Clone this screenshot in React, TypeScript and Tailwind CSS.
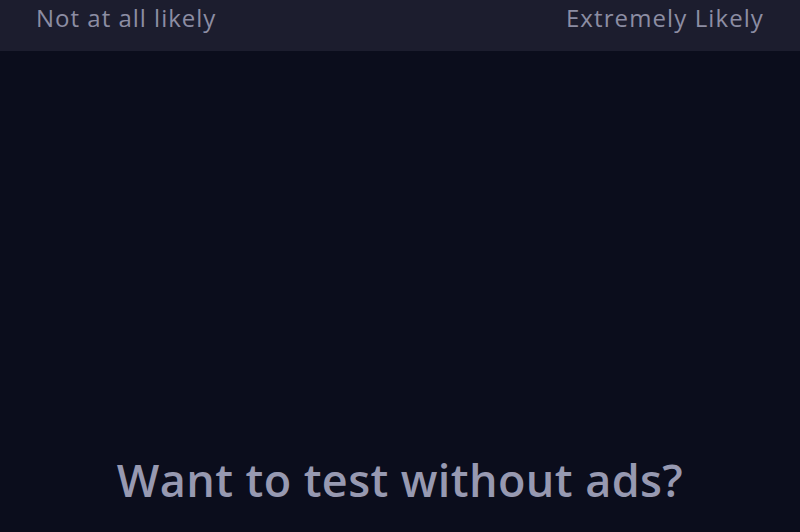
export default function App() {
  return (
    <div
      className="w-[800px] h-[532px] overflow-hidden bg-[#0b0d1c] flex flex-col"
      style={{ fontFamily: '"Open Sans", Lato, sans-serif' }}
    >
      {/* scale labels */}
      <div className="h-[51px] bg-[#1c1d2e] flex items-start justify-between pl-[36px] pr-[36px] pt-[3px]">
        <span className="text-[24px] leading-[30px] text-[#8c8da3] tracking-[1px]">Not at all likely</span>
        <span className="text-[24px] leading-[30px] text-[#8c8da3] tracking-[1.1px]">Extremely Likely</span>
      </div>

      <div className="flex-1" />

      {/* promo headline */}
      <div className="h-[80px] flex justify-center">
        <h2 className="text-[45px] leading-[56px] font-semibold text-[#9799b1] tracking-[0.4px]">
          Want to test without ads?
        </h2>
      </div>
    </div>
  );
}
